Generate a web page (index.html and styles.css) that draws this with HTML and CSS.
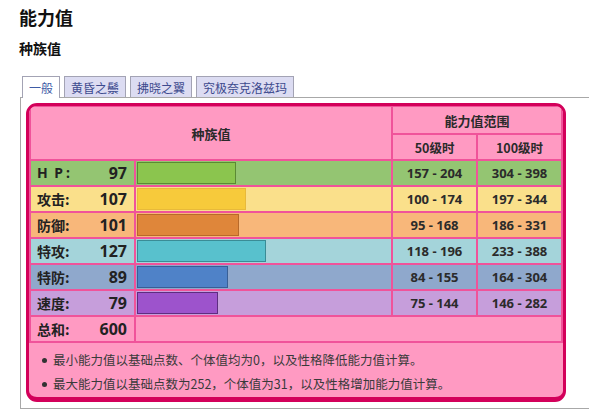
FILE: index.html
```html
<!DOCTYPE html>
<html lang="zh">
<head>
<meta charset="utf-8">
<link rel="stylesheet" href="styles.css">
</head>
<body>
<h2 class="title">能力值</h2>
<h3 class="subtitle">种族值</h3>
<div class="tabs">
  <div class="tab active">一般</div>
  <div class="tab">黄昏之鬃</div>
  <div class="tab">拂晓之翼</div>
  <div class="tab">究极奈克洛兹玛</div>
</div>
<div class="panel">
  <div class="stats">
    <table class="stat-table">
      <colgroup>
        <col class="c-label"><col class="c-bar"><col class="c-range"><col class="c-range">
      </colgroup>
      <tr class="head1">
        <th colspan="2" rowspan="2" class="h-base">种族值</th>
        <th colspan="2">能力值范围</th>
      </tr>
      <tr class="head2">
        <th>50级时</th>
        <th>100级时</th>
      </tr>
      <tr class="row hp">
        <td class="label"><div class="lab"><span class="name hpname">H P:</span><span class="val">97</span></div></td>
        <td class="barcell"><div class="bar" style="width:99px"></div></td>
        <td class="range">157 - 204</td>
        <td class="range">304 - 398</td>
      </tr>
      <tr class="row atk">
        <td class="label"><div class="lab"><span class="name">攻击:</span><span class="val">107</span></div></td>
        <td class="barcell"><div class="bar" style="width:109px"></div></td>
        <td class="range">100 - 174</td>
        <td class="range">197 - 344</td>
      </tr>
      <tr class="row def">
        <td class="label"><div class="lab"><span class="name">防御:</span><span class="val">101</span></div></td>
        <td class="barcell"><div class="bar" style="width:102px"></div></td>
        <td class="range">95 - 168</td>
        <td class="range">186 - 331</td>
      </tr>
      <tr class="row spa">
        <td class="label"><div class="lab"><span class="name">特攻:</span><span class="val">127</span></div></td>
        <td class="barcell"><div class="bar" style="width:129px"></div></td>
        <td class="range">118 - 196</td>
        <td class="range">233 - 388</td>
      </tr>
      <tr class="row spd">
        <td class="label"><div class="lab"><span class="name">特防:</span><span class="val">89</span></div></td>
        <td class="barcell"><div class="bar" style="width:91px"></div></td>
        <td class="range">84 - 155</td>
        <td class="range">164 - 304</td>
      </tr>
      <tr class="row spe">
        <td class="label"><div class="lab"><span class="name">速度:</span><span class="val">79</span></div></td>
        <td class="barcell"><div class="bar" style="width:81px"></div></td>
        <td class="range">75 - 144</td>
        <td class="range">146 - 282</td>
      </tr>
      <tr class="row total">
        <td class="label"><div class="lab"><span class="name">总和:</span><span class="val">600</span></div></td>
        <td colspan="3" class="empty"></td>
      </tr>
    </table>
    <ul class="notes">
      <li>最小能力值以基础点数、个体值均为0，以及性格降低能力值计算。</li>
      <li>最大能力值以基础点数为252，个体值为31，以及性格增加能力值计算。</li>
    </ul>
  </div>
</div>
</body>
</html>
```
FILE: styles.css
```css
html, body {
  margin: 0;
  padding: 0;
  background: #ffffff;
}
body {
  font-family: "Noto Sans CJK SC", "Noto Sans", sans-serif;
  color: #222;
  padding-left: 19px;
}
.title {
  margin: 5px 0 0;
  font-size: 18px;
  line-height: 24px;
  font-weight: bold;
  color: #111;
}
.subtitle {
  margin: 10px 0 0;
  font-size: 14px;
  line-height: 18px;
  font-weight: bold;
  color: #111;
}
.tabs {
  display: flex;
  gap: 4px;
  margin: 19px 0 0 3px;
  position: relative;
  z-index: 1;
}
.tab {
  box-sizing: border-box;
  height: 21px;
  padding: 0 6px;
  border: 1px solid #a3a3b4;
  border-bottom: none;
  background: #dcdcf2;
  font-size: 12px;
  line-height: 21px;
  color: #3d4a8e;
}
.tab.active {
  background: #ffffff;
  height: 22px;
  margin-bottom: -1px;
  color: #3e5ba6;
}
.panel {
  margin-left: 1px;
  border: 1px solid #a8a8a8;
  border-right: none;
  padding: 5px 0 6px 5px;
}
.stats {
  width: 534px;
  border: 3px solid #d3005a;
  border-bottom-width: 5px;
  border-radius: 11px;
  background: #ff9ac2;
  overflow: hidden;
}
.stat-table {
  width: 100%;
  border-collapse: separate;
  border-spacing: 2px;
  background: #f0539a;
  table-layout: fixed;
  margin: -1px 0 0;
}
.c-label { width: 103px; }
.c-bar { width: 255px; }
.c-range { width: 83px; }
.stat-table th {
  background: #ff9ac2;
  font-size: 13px;
  font-weight: bold;
  color: #2a2a2a;
  padding: 0;
  vertical-align: middle;
}
.head1 th { height: 26px; }
.head2 th { height: 24px; font-size: 12.5px; }
.h-base { font-size: 13px; }
.row td {
  padding: 0;
  vertical-align: middle;
}
.label {
  padding: 0 7px 0 6px !important;
}
.lab {
  display: flex;
  justify-content: space-between;
  align-items: center;
  height: 24px;
}
.name {
  font-size: 14px;
  font-weight: bold;
  line-height: 24px;
  color: #222;
}
.hpname {
  letter-spacing: 3px;
  word-spacing: -3px;
  font-family: "Noto Sans", sans-serif;
}
.val {
  font-family: "Noto Sans", sans-serif;
  font-size: 16px;
  font-weight: bold;
  line-height: 24px;
  color: #222;
}
.barcell {
  padding: 1px !important;
}
.bar {
  box-sizing: border-box;
  height: 22px;
  border: 1px solid;
}
.range {
  text-align: center;
  font-family: "Noto Sans", sans-serif;
  font-size: 13px;
  font-weight: bold;
  color: #2b2b2b;
}
.hp td { background: #94c572; }
.hp .bar { background: #8bc54e; border-color: #5b8a34; }
.atk td { background: #fae08b; }
.atk .bar { background: #f7ca3b; border-color: #e8b93a; }
.def td { background: #f8b77a; }
.def .bar { background: #df863a; border-color: #b8692a; }
.spa td { background: #a4d4da; }
.spa .bar { background: #58c1cd; border-color: #3a8c96; }
.spd td { background: #8fa8cc; }
.spd .bar { background: #4f82c8; border-color: #385f96; }
.spe td { background: #c69edb; }
.spe .bar { background: #9d53cc; border-color: #5e2d80; }
.total td { background: #ff9ac2; }
.notes {
  margin: 0;
  padding: 5px 0 1px 24px;
  list-style: none;
  font-size: 12.5px;
  line-height: 24px;
  color: #3a3a3a;
}
.notes li {
  position: relative;
}
.notes li::before {
  content: "";
  position: absolute;
  left: -11px;
  top: 10px;
  width: 5px;
  height: 5px;
  border-radius: 50%;
  background: #333;
}
```
